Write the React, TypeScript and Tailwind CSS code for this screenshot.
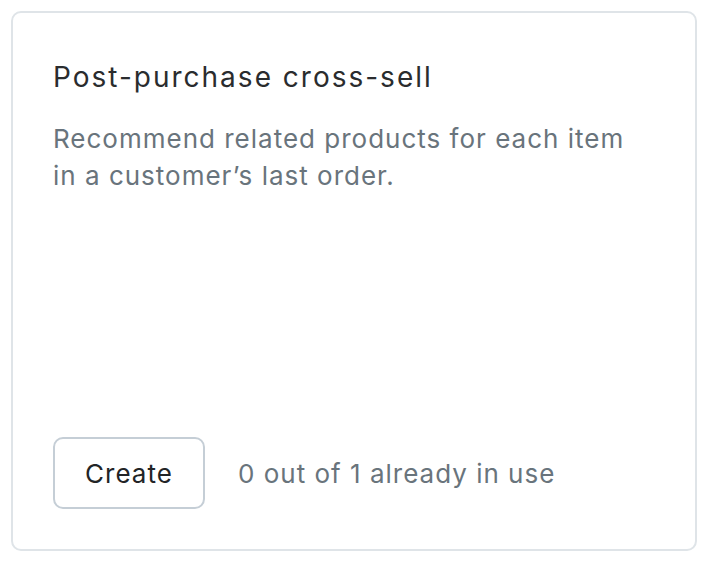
export default function App() {
  return (
    <div className="w-[708px] h-[564px] bg-white p-[11px] font-['Inter',sans-serif]">
      <div className="h-[540px] rounded-[10px] border-2 border-[#dfe4e8] px-[40px] pt-[46px] pb-[40px] flex flex-col">
        <h2 className="text-[28px] leading-[36px] text-[#2a2c2e] tracking-[2px]">Post-purchase cross-sell</h2>
        <p className="mt-[25px] text-[26px] leading-[37px] text-[#69747c] tracking-[1px] max-w-[590px]">
          Recommend related products for each item in a customer’s last order.
        </p>
        <div className="mt-auto flex items-center gap-[33px]">
          <button className="w-[152px] h-[72px] rounded-[10px] border-2 border-[#c5ced6] bg-white text-[26px] tracking-[1px] text-[#222426]">
            Create
          </button>
          <span className="text-[26px] tracking-[1px] text-[#69747c]">0 out of 1 already in use</span>
        </div>
      </div>
    </div>
  );
}
